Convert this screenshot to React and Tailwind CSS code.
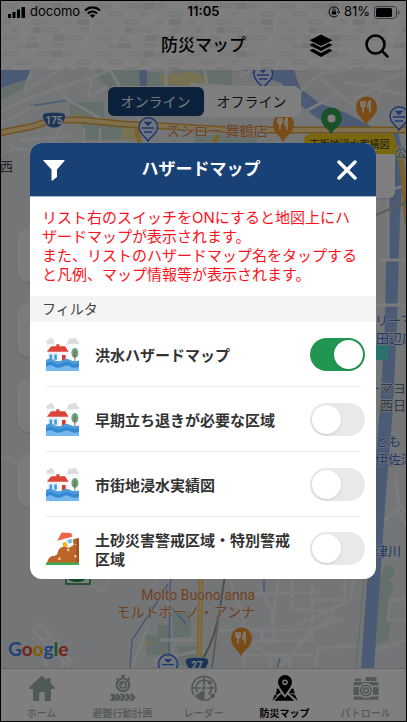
import React, { useState } from 'react';

const HAZARD_LAYERS = [
  { id: 'flood', name: '洪水ハザードマップ', icon: 'flood', enabled: true },
  { id: 'evacuate', name: '早期立ち退きが必要な区域', icon: 'flood', enabled: false },
  { id: 'history', name: '市街地浸水実績図', icon: 'flood', enabled: false },
  { id: 'landslide', name: '土砂災害警戒区域・特別警戒区域', icon: 'landslide', enabled: false },
];

// --- HAZARD ICONS ---
function FloodIcon() {
  return (
    <svg viewBox="0 0 32 32" className="size-[33px] shrink-0" aria-hidden="true">
      <g fill="#dcdde0">
        <circle cx="2.5" cy="3.5" r="2" /><circle cx="5" cy="2.2" r="2.2" /><rect x="0.5" y="2.5" width="7.5" height="3" rx="1.5" />
        <circle cx="24" cy="3.2" r="2.6" /><circle cx="27.5" cy="2.6" r="2.6" /><rect x="20.5" y="3" width="11.5" height="3" rx="1.5" />
      </g>
      <g stroke="#a9e0f0" strokeWidth="0.8" strokeDasharray="1 2.2">
        <path d="M1.5 7v6M4 6v6M7 6v3M23 7v4M26 7v3M30 7v6M20 6v3" />
      </g>
      <path d="M2 13h19v11H2z" fill="#eceef1" />
      <path d="M11 13l5 1 5-1v11h-8z" fill="#f6f6f7" />
      <path d="M10 6h3v2h5.5l3.5 5.3H0.8L5 8h5z" fill="#dc4437" />
      <path d="M3.5 16H6v5H3.500zM8 16h2.500v5H8z" fill="#3d9be0" />
      <path d="M15.500 16.500H19V24h-3.500z" fill="#d23b35" />
      <ellipse cx="28" cy="14.500" rx="3.400" ry="4.800" fill="#6aa582" />
      <path d="M28 12v11M28 15l1.500-1.500M28 17l-1.500-1.500" stroke="#80604a" strokeWidth="0.900" fill="none" />
      <path d="M0 21.500c3-2 5-1.500 8 0s5 1.500 8 0 5-1.500 8 0 5 1.500 8 0V32H0z" fill="#4a9bdc" />
      <path d="M0 24.500c3-2 5-1.500 8 0s5 1.500 8 0 5-1.500 8 0 5 1.500 8 0v3c-3 1.500-5 1.500-8 0s-5-1.500-8 0-5 1.500-8 0-5-1.500-8 0z" fill="#3488cf" />
      <path d="M0 28c3-2 5-1.500 8 0s5 1.500 8 0 5-1.500 8 0 5 1.500 8 0v4H0z" fill="#74b8ee" />
    </svg>
  );
}

function LandslideIcon() {
  return (
    <svg viewBox="0 0 32 32" className="size-[33px] shrink-0" aria-hidden="true">
      <path d="M32 6v24H1c1-4 3-7 7-7 3 0 3-2 4-5 1.500-4 6-4 8-5 4-2 4-7 12-7z" fill="#bd6428" />
      <path d="M32 6v24h-2.500V6.500z" fill="#a5521f" />
      <path d="M14.500 8l11-2 1.500 6.500-5 3-5-2.500z" fill="#f3f6fa" />
      <path d="M11 8.500l4-8 9.500 0.500 1 3.500z" fill="#ee6547" />
      <path d="M20.500 8l4-1.500 1 3.500-3.500 1.500z" fill="#62c6ea" />
      <path d="M16 11l3-1.500 2.500 3.500-3 1.500-2-0.500z" fill="#f0b51d" />
      <g fill="#f0cdb8">
        <circle cx="21.500" cy="17.500" r="1.200" /><circle cx="13" cy="26" r="1.300" />
        <circle cx="28.500" cy="23.500" r="1.200" /><circle cx="29" cy="12" r="0.600" />
      </g>
      <path d="M0 29.500h32V32H0z" fill="#3fae4f" />
    </svg>
  );
}

// --- TAB BAR ICONS ---
function HomeIcon() {
  return (
    <svg viewBox="0 0 26 26" className="size-[26px]" fill="currentColor" aria-hidden="true">
      <path d="M13 0.500L0.600 12c-.8.900-.4 2 .8 2H4v10.500c0 1 .5 1.500 1.500 1.500h4.700v-7.500c0-1 .6-1.500 1.500-1.500h2.600c.9 0 1.500.5 1.500 1.500V26h4.700c1 0 1.500-.5 1.500-1.500V14h2.600c1.200 0 1.600-1.100.8-2L21.500 8.300V3h-3.700v2z" />
    </svg>
  );
}

function PlanIcon() {
  return (
    <svg viewBox="0 0 26 26" className="size-[26px]" aria-hidden="true">
      <circle cx="13" cy="9.800" r="6.300" fill="none" stroke="currentColor" strokeWidth="2.200" />
      <circle cx="13" cy="9.800" r="3.200" fill="none" stroke="currentColor" strokeWidth="1.600" />
      <path d="M11 0.800h4M13 0.500v3M13 9.800l-1.800-2M6.700 3.600l1.600 1.300M18 4.500l1.600-1.700" stroke="currentColor" strokeWidth="2" fill="none" />
      <path d="M0 18.800h4l3 3.600-3 3.600H0l2-3.600zM5 18.800h3.300l3 3.600-3 3.600H5l2.500-3.600zM9.800 18.800h3.300l3 3.600-3 3.600H9.800l2.500-3.600zM14.600 18.800h3.300l3 3.600-3 3.600h-3.300l2.500-3.600zM19.400 18.800h3.300l3 3.600-3 3.600h-3.300l2.500-3.600z" fill="currentColor" />
    </svg>
  );
}

function RadarIcon() {
  return (
    <svg viewBox="0 0 26 26" className="size-[26px]" fill="none" stroke="currentColor" strokeWidth="1.700" aria-hidden="true">
      <path d="M3 20A12 12 0 1 1 25 13c0 2-.3 3.400-1 5M14 25.200c2 0 4-.7 5.500-1.700" />
      <path d="M6.500 17A7.500 7.500 0 0 1 16.500 6.300M20.300 10.500c.7 3.500-.3 6.500-2.800 8.500" />
      <path d="M13 1v9M16 13h9M1 13h9" />
      <path d="M11.500 15.500l-7.500 5.500c1.500 2.800 5 4.800 9.500 4.800v-9.800z" fill="currentColor" stroke="none" />
      <g fill="currentColor" stroke="none">
        <circle cx="13" cy="13" r="1.900" /><circle cx="18.800" cy="7.500" r="2.300" /><circle cx="21.500" cy="21" r="2.400" />
      </g>
    </svg>
  );
}

function MapPinIcon() {
  return (
    <svg viewBox="0 0 26 26" className="size-[26px]" fill="currentColor" aria-hidden="true">
      <path fillRule="evenodd" d="M13 0a7 7 0 0 1 7 7c0 4-4.500 9-7 13-2.500-4-7-9-7-13a7 7 0 0 1 7-7zm0 4.400a2.800 2.800 0 1 0 0 5.600 2.800 2.800 0 0 0 0-5.600z" />
      <circle cx="13" cy="7.200" r="1.300" />
      <path d="M4.800 13.500h1.500l2.500 4-5 3zM2.800 19.500l2.500 1.500L.3 25.800zM19.700 13.500h1.600l1.500 5-6-.5zM17 18.500l6 1.200 2.700 6.100zM9.300 18.500l3.700 4.200 2.500-3.200 6.800 6.300H2.300z" />
    </svg>
  );
}

function CameraIcon() {
  return (
    <svg viewBox="0 0 26 26" className="size-[26px]" aria-hidden="true">
      <path d="M2 3.500h6V6H2zM12.500 2h11v4h-11zM1.500 7h23c.8 0 1 .5 1 1v2.500H19a8 8 0 0 0-12 0H.500V8c0-.5.3-1 1-1zM.500 12H6v8H.500zM20 12h5.500v8H20zM.500 21.500H8c3 2.300 7 2.300 10 0h7.500V24c0 .5-.3.800-1 .800h-23c-.7 0-1-.3-1-.8z" fill="currentColor" />
      <circle cx="13" cy="15.500" r="5.300" fill="none" stroke="currentColor" strokeWidth="1.600" />
      <circle cx="13" cy="15.500" r="2.400" fill="none" stroke="currentColor" strokeWidth="1.600" />
    </svg>
  );
}

const TABS = [
  { label: 'ホーム', Icon: HomeIcon },
  { label: '避難行動計画', Icon: PlanIcon },
  { label: 'レーダー', Icon: RadarIcon },
  { label: '防災マップ', Icon: MapPinIcon, active: true },
  { label: 'パトロール', Icon: CameraIcon },
];

// --- MAP ---
function FoodPin({ x, y }) {
  return (
    <g transform={`translate(${x} ${y})`}>
      <path d="M0 0c-1-6-10-10-10-19a10.500 10.500 0 0 1 21 0C11 -10 1-6 0 0z" fill="#f5992a" />
      <path d="M-5-25v4c0 1 .8 1.500 1.700 1.500h.6c.9 0 1.700-.5 1.700-1.500v-4M-3-25v11.500M4-13.500v-11.500c-1.500 1-2.200 3-2.200 6.500h2" stroke="#fff" strokeWidth="1.500" fill="none" />
    </g>
  );
}

function StationPin({ x, y }) {
  return (
    <g transform={`translate(${x} ${y})`}>
      <path d="M0 12C-3 7-9 5-9-2a9.300 9.300 0 0 1 18.600 0C9.500 5 3 7 0 12z" fill="#dfe8fb" stroke="#3f6fe0" strokeWidth="1.500" />
      <path d="M-4-7h8L0-3zM-6-1.500h12v1H-6zM-4 2.500h8v1h-8z" fill="#3f6fe0" stroke="#3f6fe0" strokeWidth="0.500" />
    </g>
  );
}

function RouteShield({ x, y, children }) {
  return (
    <g transform={`translate(${x} ${y})`}>
      <path d="M-9-7c5-1 13-1 18 0 3 1 3 4 1.500 7C8 5 5 8 0 8s-8-3-10.500-8C-12-3-12-6-9-7z" fill="#3568b0" stroke="#dfe6f2" strokeWidth="0.800" />
      <text y="4" textAnchor="middle" fontSize="10" fontWeight="700" fill="#fff">{children}</text>
    </g>
  );
}

function TownMap() {
  return (
    <svg viewBox="0 70 407 598" preserveAspectRatio="xMidYMid slice" className="absolute inset-0 size-full font-[Roboto,'Noto_Sans_CJK_JP',sans-serif]" role="img" aria-label="地図">
      <path d="M0 70h407v598H0z" fill="#e9ebee" />
      {/* parks */}
      <g fill="#cbded6">
        <path d="M0 88l26-10 4 8-30 14zM97 70h42v18h-28l-12-8zM108 72h58l20 16h-36l-12 10-30-12zM172 70h60v18h-52zM70 102h34v16l-34-2zM82 122h32l20 4v14H82zM195 135h62v8h-62zM155 88h50v28h-50z" />
        <path d="M378 574h10l6 14-6 12 4 20-4 20-14 6 2-36zM173 611h18v26h-18zM158 625h12v30h-24v-20h12zM178 646h20v20h-20zM384 566h10v12h-12z" />
      </g>
      {/* built-up areas */}
      <path d="M160 74h20l8-3 22 6-12 14-18-6-20-2zM120 92l16-8-4 14-12 4zM205 90h16v10h-16zM78 112l8 8-6 6-8-6zM122 124h14v16h-14zM145 641h6v4h-6zM398 165h9v42h-6z" fill="#f2e3a8" />
      {/* water */}
      <g fill="#97b6ea">
        <path d="M0 70h32l-5 9-27 9zM139 70h8v17h-7zM243 70h51l6 18 19 15 27 10 26 14h-31l-24-9-20-15-16-20z" />
        <path d="M388 132h10l6 26-4 60-3 105-4 84-8 100-11 161h-13l11-160 8-101 5-84 2-110z" />
      </g>
      <path d="M171 579l-1 6-1 83M172 608l14 16M168 584l-16 26-20 30-2 28M264 579v14M280 658l-3 10M70 100l-40 6" stroke="#8db4f0" strokeWidth="1.500" fill="none" />
      <path d="M364 579l-8 89M0 160l8-4M190 131l16 12" stroke="#bcd9c8" strokeWidth="1" fill="none" />
      {/* side streets */}
      <g stroke="#f5f6f8" strokeWidth="3" fill="none" strokeLinejoin="round">
        <path d="M32 70l-8 22M24 92l36-22M0 112l32-15 60-20 18-7M52 80l16 20 32 18M92 77l-4 20M88 97l20-10M0 124l34-18M110 70l30 50M166 70v46M140 88l66 12 30 6M205 70l6 50M190 84l60 4M240 76l12-6M300 92l20-18 24-4M320 78l36 30M336 95l-30 16M344 82l24 4 39-14M352 100l24-12 31 8M385 80l-12 30M60 128l-8 15M84 128v15M100 128v15M20 140l50-4" />
        <path d="M10 143l4 6h14M0 457h8l10 8M376 205l4-12 27-8M380 260h27M382 195h6v64h-6M376 305h31M395 475l4 30 8 8M384 520l14-10 9 16" />
        <path d="M212 630h100l22-14M230 580l14 40v48M250 594l70-2M258 585l14 25v20M278 579l-6 51M292 579v30l42 2M312 580v60l-64 2M244 655h68M250 630v14l18 10M262 630v10h12v-10M280 668l32-38 30-12M310 600h40l4-21M316 668l2-20 38-2M270 655v13M290 655v13M345 579v24l-52 24" />
        <path d="M148 626l-16 42M110 579l-8 12-20-12M34 632l36 36M34 632c-2-6 8-10 10-5l28 36M42 642l12-8M46 650l14-10M60 668l10-10M44 660l4 8M160 640h40M155 590l18 18M156 579l-4 10M390 600h16v20h-18zM376 650l30-10M204 650l-50 10" />
      </g>
      {/* trunk roads and railway */}
      <path d="M0 133l34-7 18-6h30l40 4 40 2 70 4h175" stroke="#e3a63e" strokeWidth="7" fill="none" />
      <path d="M0 133l34-7 18-6h30l40 4 40 2 70 4h175" stroke="#ffe39b" strokeWidth="4" fill="none" />
      <path d="M201 575l-2 93M136 128l4 15M218 135l-4 8M390 133l12 30 5 60" stroke="#f2c45c" strokeWidth="5" fill="none" />
      <path d="M201 575l-2 93" stroke="#ffdf86" strokeWidth="3" fill="none" />
      <path d="M225 575l-6 40c-6 26-12 38-20 50" stroke="#9a9da1" strokeWidth="2" fill="none" />
      <path d="M219 612l-7 56M350 226l57-24" stroke="#b3b6ba" strokeWidth="2" fill="none" />
      <path d="M376 343h12v17h-12z" fill="#57e4dc" />
      {/* places */}
      <StationPin x={263} y={76} />
      <StationPin x={148} y={129} />
      <StationPin x={399} y={118} />
      <FoodPin x={366} y={126} />
      <FoodPin x={283} y={143} />
      <FoodPin x={241} y={657} />
      <path d="M331 135c-1-6-10-8-10-17a10.500 10.500 0 0 1 21 0c0 9-10 11-11 17z" fill="#34a353" />
      <circle cx="331.500" cy="118.500" r="4" fill="#fff" />
      <path d="M66 570h24v14H66z" fill="#f4fbf5" stroke="#1f8b45" strokeWidth="1.500" />
      <ellipse cx="77" cy="578" rx="9" ry="4" fill="#1f8b45" />
      <circle cx="168" cy="664" r="9.500" fill="#dfe8fb" stroke="#3f6fe0" strokeWidth="1.500" />
      <path d="M164 659h8l-4 4zM162 664h12v1.300h-12z" fill="#3f6fe0" />
      <RouteShield x={54} y={120}>175</RouteShield>
      <RouteShield x={197} y={665}>27</RouteShield>
      {/* labels */}
      <g stroke="#e9ebee" strokeWidth="1.500" paintOrder="stroke" strokeLinejoin="round">
        <g fill="#e3843f" fontSize="14">
          <text x="166" y="136">スシロー 舞鶴店</text>
          <text x="255" y="600" textAnchor="end" fontSize="14">Molto Buono anna</text>
          <text x="255" y="617" textAnchor="end">モルトボーノ・アンナ</text>
        </g>
        <g fill="#3f72cf" fontSize="13">
          <text x="375" y="325">リーマ</text>
          <text x="376" y="343">田辺店</text>
          <text x="375" y="446">とも・</text>
          <text x="375" y="464">伊佐津</text>
          <text x="375" y="556">津川</text>
        </g>
        <g fill="#5e7884" fontSize="13">
          <text x="367" y="393">ーマヨ</text>
          <text x="380" y="410">西日</text>
        </g>
        <text x="0" y="171" fontSize="13" fill="#4a4d52">西</text>
        <text x="395" y="158" fontSize="12" fill="#4b8a5c">公</text>
      </g>
      <text x="8" y="656" fontSize="19" fontWeight="700" className="font-[Lato,sans-serif]">
        <tspan fill="#4285f4">G</tspan><tspan fill="#ea4335">o</tspan><tspan fill="#fbbc05">o</tspan><tspan fill="#4285f4">g</tspan><tspan fill="#34a853">l</tspan><tspan fill="#ea4335">e</tspan>
      </text>
    </svg>
  );
}

// --- TOP BAR ---
function BrickTexture() {
  return (
    <svg className="absolute inset-0 size-full" aria-hidden="true">
      <defs>
        <pattern id="bricks" width="92" height="48" patternUnits="userSpaceOnUse">
          <g fill="#f4f4f4">
            <path d="M2 2h16v6H2zM34 2h14v6H34zM64 2h8v6h-8zM14 10h16v6H14zM46 10h8v6h-8zM74 10h16v6H74zM2 18h8v6H2zM30 18h16v6H30zM62 18h8v6h-8zM10 26h8v6h-8zM42 26h16v6H42zM80 26h8v6h-8zM2 34h16v6H2zM26 34h8v6h-8zM66 34h16v6H66zM14 42h8v5h-8zM50 42h14v5H50z" />
          </g>
          <path d="M50 2h12v6H50zM32 26h8v6h-8zM52 34h12v6H52zM24 42h14v5H24zM76 18h12v6H76z" fill="#eaeaea" />
        </pattern>
      </defs>
      <rect width="100%" height="100%" fill="url(#bricks)" />
    </svg>
  );
}

function StatusBar() {
  return (
    <div className="grid h-[22px] grid-cols-3 items-center px-[6px] font-[Inter,'Liberation_Sans',sans-serif] text-[13px] text-black">
      <div className="flex items-center gap-1">
        <svg viewBox="0 0 19 12" className="h-3 w-[19px]" aria-hidden="true">
          <path d="M1 8h3v4H1zM5.500 6h3v6h-3zM10 3.500h3V12h-3zM14.500 1h3.500v11h-3.500z" />
        </svg>
        <span>docomo</span>
        <svg viewBox="0 0 17 12" className="h-3 w-[17px]" fill="none" stroke="currentColor" strokeWidth="2.200" aria-hidden="true">
          <path d="M1 4.500c4.500-4.200 10.500-4.200 15 0M3.800 7.500c2.800-2.600 6.600-2.600 9.400 0" />
          <path d="M8.500 12L5.800 9.300c1.500-1.300 3.900-1.300 5.400 0z" fill="currentColor" stroke="none" />
        </svg>
      </div>
      <time className="text-center font-semibold">11:05</time>
      <div className="flex items-center justify-end gap-1">
        <svg viewBox="0 0 12 12" className="size-3" fill="none" stroke="currentColor" aria-hidden="true">
          <path d="M9.500 9.500A5 5 0 1 1 11 5.500M9 5.500l2 1.800 1.500-2M4.800 5.500V4.300a1.200 1.200 0 0 1 2.400 0v1.200" />
          <path d="M3.800 5.300h4.400v3.200H3.800z" fill="currentColor" stroke="none" />
        </svg>
        <span>81%</span>
        <svg viewBox="0 0 26 13" className="h-[13px] w-[26px]" aria-hidden="true">
          <rect x="0.500" y="0.500" width="22" height="12" rx="3" fill="none" stroke="#777" />
          <rect x="2" y="2" width="16" height="9" rx="1.500" />
          <path d="M24 4.500c2 .5 2 3.500 0 4z" fill="#777" />
        </svg>
      </div>
    </div>
  );
}

function AppHeader() {
  return (
    <header className="relative h-[69px] bg-white">
      <BrickTexture />
      <div className="relative">
        <StatusBar />
        <div className="grid h-[46px] grid-cols-3 items-center">
          <h1 className="col-start-2 text-center text-[17px] font-medium text-black">防災マップ</h1>
          <div className="flex items-center justify-end gap-8 pr-[17px]">
            <button type="button" aria-label="レイヤー">
              <svg viewBox="0 0 24 24" className="size-6" aria-hidden="true">
                <path d="M12 0.500l11.500 5.800L12 12 0.500 6.300zM0.500 11l3.300-1.700L12 13.500l8.200-4.200 3.300 1.700L12 17zM0.500 16.500l3.300-1.700L12 19l8.200-4.200 3.300 1.700L12 23z" />
              </svg>
            </button>
            <button type="button" aria-label="検索">
              <svg viewBox="0 0 24 24" className="size-6" fill="none" stroke="currentColor" strokeWidth="2.600" strokeLinecap="round" aria-hidden="true">
                <circle cx="10.500" cy="10.500" r="9" />
                <path d="M17.200 17.200l5.300 5.300" />
              </svg>
            </button>
          </div>
        </div>
      </div>
    </header>
  );
}

function MapArea() {
  return (
    <main className="relative flex-1 overflow-hidden">
      <TownMap />
      <div className="absolute top-4 left-1/2 flex w-[194px] -translate-x-1/2 rounded-lg bg-white p-px text-sm text-[#222]">
        <button type="button" className="h-[29px] flex-1 rounded-md bg-[#184378] text-[#eee] shadow">オンライン</button>
        <button type="button" className="h-[29px] flex-1">オフライン</button>
      </div>
      <div className="absolute top-16 right-[11px] w-[91px] overflow-hidden rounded-md bg-white pb-11 shadow">
        <p className="bg-[#f5cf1b] text-center text-[10px] leading-5 text-[#333]">市街地浸水実績図</p>
      </div>
      <div className="absolute top-[158px] left-4 flex flex-col gap-[21px]">
        {['現在地', '凡例', 'レイヤー', '投稿'].map((k) => (
          <button key={k} type="button" aria-label={k} className="size-[54px] rounded-xl bg-[#f6f6f7] shadow" />
        ))}
      </div>
    </main>
  );
}

function TabBar() {
  return (
    <nav className="grid h-[53px] grid-cols-5 border-t border-[#ccc] bg-white">
      {TABS.map(({ label, Icon, active }) => (
        <a key={label} href="#" className={`flex flex-col items-center gap-1 pt-[6px] text-[10px] leading-4 ${active ? 'font-bold text-black' : 'font-medium text-[#a3b0b0]'}`}>
          <Icon />
          <span className="whitespace-nowrap">{label}</span>
        </a>
      ))}
    </nav>
  );
}

// --- MODAL ---
function HazardModal() {
  const [layers, setLayers] = useState(HAZARD_LAYERS);

  const toggle = (id) => {
    setLayers(layers.map((l) => (l.id === id ? { ...l, enabled: !l.enabled } : l)));
  };

  return (
    <div className="absolute inset-0 flex items-center justify-center bg-black/50 pr-[30px] pl-[29px]">
      <section role="dialog" aria-labelledby="hazard-title" className="w-full overflow-hidden rounded-xl bg-white">
        <header className="flex h-[54px] items-center justify-between border-b border-[#a3b8d2] bg-[#184175] px-[13px] text-white">
          <svg viewBox="0 0 22 22" className="size-[22px]" fill="currentColor" aria-hidden="true">
            <path d="M1 1h20c.6 0 .8.600.4 1L14 10.500v7.500L9.500 21.500c-.6.400-1 .2-1-.4V10.500L.600 2C.200 1.600.400 1 1 1z" />
          </svg>
          <h2 id="hazard-title" className="text-[17px] font-bold">ハザードマップ</h2>
          <button type="button" aria-label="閉じる" className="pr-[6px]">
            <svg viewBox="0 0 20 20" className="size-5" stroke="currentColor" strokeWidth="3.400" strokeLinecap="round" aria-hidden="true">
              <path d="M2 2l16 16M18 2L2 18" />
            </svg>
          </button>
        </header>
        <p className="px-3 pt-[11px] pb-3 text-[15px] leading-[19px] text-[#ff1020]">
          リスト右のスイッチをONにすると地図上にハザードマップが表示されます。
          <br />
          また、リストのハザードマップ名をタップすると凡例、マップ情報等が表示されます。
        </p>
        <h3 className="bg-[#f4f4f4] px-3 text-sm leading-[26px] text-[#444]">フィルタ</h3>
        <ul className="px-4">
          {layers.map((layer) => (
            <li key={layer.id} className="flex h-[65px] items-center gap-4 border-b border-[#e9eeef] last:h-[62px] last:border-b-0">
              {layer.icon === 'flood' ? <FloodIcon /> : <LandslideIcon />}
              <label htmlFor={layer.id} className="flex-1 pt-[3px] text-[15px] leading-[19px] font-bold text-[#333]">{layer.name}</label>
              <input
                id={layer.id}
                type="checkbox"
                role="switch"
                checked={layer.enabled}
                onChange={() => toggle(layer.id)}
                className="-mr-[5px] h-[33px] w-[55px] shrink-0 appearance-none rounded-full bg-[#e9e9e9] p-[2px] transition-colors before:block before:size-[29px] before:rounded-full before:bg-white before:shadow before:content-[''] checked:bg-[#219653] checked:before:translate-x-[22px]"
              />
            </li>
          ))}
        </ul>
      </section>
    </div>
  );
}

export default function App() {
  return (
    <div lang="ja" className="relative flex min-h-screen flex-col border border-black font-[Inter,'Noto_Sans_CJK_JP',sans-serif]">
      <AppHeader />
      <MapArea />
      <TabBar />
      <HazardModal />
    </div>
  );
}
